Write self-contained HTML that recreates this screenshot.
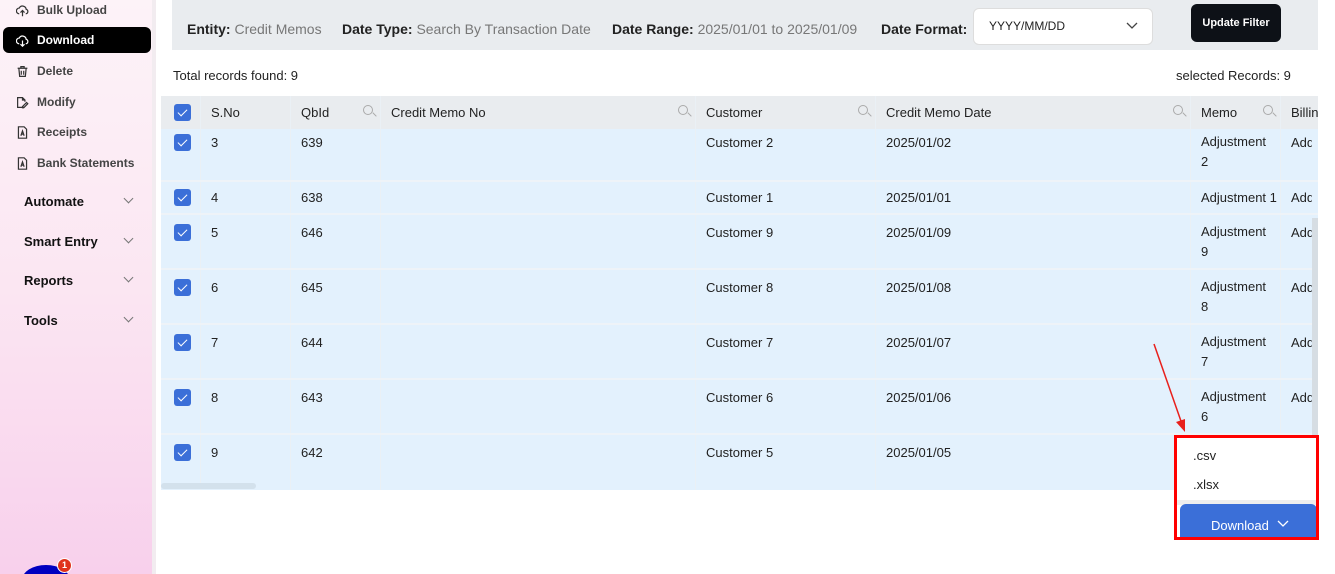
<!DOCTYPE html>
<html><head><style>
*{margin:0;padding:0;box-sizing:border-box}
html,body{width:1335px;height:574px;overflow:hidden}
body{background:#fff;font-family:"Liberation Sans",sans-serif;font-size:13px;color:#222;position:relative}
.side{position:absolute;left:0;top:0;width:156px;height:574px;background:linear-gradient(#fdf3f8,#fbe6f2 50%,#f8d0ec);border-right:4px solid #f2ecf0;overflow:hidden}
.it{position:absolute;left:16px;font-size:12px;font-weight:bold;color:#444;display:flex;align-items:center;gap:8px}
.it svg{width:13px;height:13px}
.act{position:absolute;left:3px;top:27px;width:148px;height:26px;background:#000;border-radius:6px}
.grp{position:absolute;left:24px;font-size:13px;font-weight:bold;color:#111}
.chev{position:absolute;left:125px;width:7px;height:7px;border-right:1.5px solid #777;border-bottom:1.5px solid #777;transform:rotate(45deg)}
.filter{position:absolute;left:172px;top:0;width:1146px;height:50px;background:#e9ecef}
.f{position:absolute;top:21px;font-size:14px}
.f b{color:#222}.f span{color:#777}
.sel{position:absolute;left:973px;top:8px;width:180px;height:37px;background:#fff;border:1px solid #ddd;border-radius:6px;font-size:12px;padding:10px 0 0 15px}
.upd{position:absolute;left:1191px;top:4px;width:90px;height:38px;background:#0d1117;border-radius:6px;color:#fff;font-size:11px;font-weight:bold;text-align:center;line-height:38px}
.tbl{position:absolute;left:161px;top:96px;width:1157px;height:394px;background:#e3f1fd;overflow:hidden}
.hd{position:absolute;left:0;top:0;width:100%;height:33px;background:#e9ecef}
.c{position:absolute;font-size:13px}
.cb{position:absolute;width:17px;height:17px;background:#3b6fd8;border-radius:3px}
.cb:after{content:"";position:absolute;left:6px;top:3px;width:4px;height:8px;border-right:1.5px solid #fff;border-bottom:1.5px solid #fff;transform:rotate(45deg)}
.vl{position:absolute;top:0;width:1px;height:394px;background:#eaf0f5}
.hl{position:absolute;left:0;width:100%;height:2px;background:#eef3f8}
.srch{position:absolute;top:9px;width:10px;height:10px;border:1.3px solid #aaa;border-radius:50%}
.srch:after{content:"";position:absolute;left:8px;top:8px;width:5px;height:1.3px;background:#aaa;transform:rotate(45deg)}
</style></head><body>
<div class="side">
<div class="act"></div>
<div class="it" style="top:3px"><svg viewBox="0 0 16 16" fill="none" stroke="#333" stroke-width="1.5"><path d="M4 12a3.5 3.5 0 0 1 0-7 4.5 4.5 0 0 1 8.5 1.5A2.8 2.8 0 0 1 12 12M8 15V8M5.5 10.5 8 8l2.5 2.5"/></svg>Bulk Upload</div>
<div class="it" style="top:33px;color:#fff"><svg viewBox="0 0 16 16" fill="none" stroke="#fff" stroke-width="1.5"><path d="M4 12a3.5 3.5 0 0 1 0-7 4.5 4.5 0 0 1 8.5 1.5A2.8 2.8 0 0 1 12 12M8 8v7M5.5 12.5 8 15l2.5-2.5"/></svg>Download</div>
<div class="it" style="top:64px"><svg viewBox="0 0 16 16" fill="none" stroke="#333" stroke-width="1.5"><path d="M2 4h12M6 4V2h4v2M3.5 4l1 10h7l1-10M6.5 7v5M9.5 7v5"/></svg>Delete</div>
<div class="it" style="top:95px"><svg viewBox="0 0 16 16" fill="none" stroke="#333" stroke-width="1.5"><path d="M10 14H2V2h6l3 3v2M8 2v3h3M8 13l5-5 1.5 1.5-5 5H8z"/></svg>Modify</div>
<div class="it" style="top:125px"><svg viewBox="0 0 16 16" fill="none" stroke="#333" stroke-width="1.5"><path d="M3 1h7l3 3v11H3zM6 12l2-6 2 6M6.5 10h3"/></svg>Receipts</div>
<div class="it" style="top:156px"><svg viewBox="0 0 16 16" fill="none" stroke="#333" stroke-width="1.5"><path d="M3 1h7l3 3v11H3zM6 12l2-6 2 6M6.5 10h3"/></svg>Bank Statements</div>
<div class="grp" style="top:194px">Automate</div><div class="chev" style="top:195px"></div>
<div class="grp" style="top:234px">Smart Entry</div><div class="chev" style="top:235px"></div>
<div class="grp" style="top:273px">Reports</div><div class="chev" style="top:274px"></div>
<div class="grp" style="top:313px">Tools</div><div class="chev" style="top:314px"></div>
<div style="position:absolute;left:22px;top:565px;width:48px;height:30px;background:#0000c0;border-radius:50%"></div>
<div style="position:absolute;left:57px;top:558px;width:15px;height:15px;background:#e0321c;border:1.5px solid #fff;border-radius:50%;color:#fff;font-size:9px;font-weight:bold;text-align:center;line-height:12px">1</div>
</div>
<div class="filter"></div>
<div class="f" style="left:187px"><b>Entity:</b> <span>Credit Memos</span></div>
<div class="f" style="left:342px"><b>Date Type:</b> <span>Search By Transaction Date</span></div>
<div class="f" style="left:612px"><b>Date Range:</b> <span>2025/01/01 to 2025/01/09</span></div>
<div class="f" style="left:881px"><b>Date Format:</b></div>
<div class="sel">YYYY/MM/DD<svg style="position:absolute;left:152px;top:13px" width="12" height="8"><path d="M1 1l5 5 5-5" fill="none" stroke="#444" stroke-width="1.3"/></svg></div>
<div class="upd">Update Filter</div>
<div class="c" style="left:173px;top:68px">Total records found: 9</div>
<div class="c" style="left:1176px;top:68px">selected Records: 9</div>
<div class="tbl">
<div class="hd"></div>
<div class="vl" style="left:39px"></div><div class="vl" style="left:129px"></div><div class="vl" style="left:219px"></div><div class="vl" style="left:534px"></div><div class="vl" style="left:714px"></div><div class="vl" style="left:1029px"></div><div class="vl" style="left:1119px"></div>
<div class="hl" style="top:84px"></div><div class="hl" style="top:117px"></div><div class="hl" style="top:172px"></div><div class="hl" style="top:227px"></div><div class="hl" style="top:282px"></div><div class="hl" style="top:337px"></div>
<div class="srch" style="left:202px"></div><div class="srch" style="left:517px"></div><div class="srch" style="left:697px"></div><div class="srch" style="left:1012px"></div><div class="srch" style="left:1102px"></div>
<div class="cb" style="left:13px;top:8px"></div>
<div class="c" style="left:50px;top:9px">S.No</div><div class="c" style="left:140px;top:9px">QbId</div><div class="c" style="left:230px;top:9px">Credit Memo No</div><div class="c" style="left:545px;top:9px">Customer</div><div class="c" style="left:725px;top:9px">Credit Memo Date</div><div class="c" style="left:1040px;top:9px">Memo</div><div class="c" style="left:1130px;top:9px">Billing</div>
<div style="position:absolute;left:0;top:387px;width:95px;height:6px;background:#d3e1ec;border-radius:3px"></div>
<div style="position:absolute;left:1151px;top:122px;width:6px;height:272px;background:#d6dde3"></div>
</div>
<div id="rows"></div>
<script>
var r=[[3,639,2,2,142],[4,638,1,1,197],[5,646,9,9,232],[6,645,8,8,287],[7,644,7,7,342],[8,643,6,6,397],[9,642,5,5,452]];
var h='';r.forEach(function(a){var t=a[4]-7;
h+='<div class="cb" style="left:174px;top:'+(t-1)+'px"></div>';
h+='<div class="c" style="left:211px;top:'+t+'px">'+a[0]+'</div><div class="c" style="left:301px;top:'+t+'px">'+a[1]+'</div><div class="c" style="left:706px;top:'+t+'px">Customer '+a[2]+'</div><div class="c" style="left:886px;top:'+t+'px">2025/01/0'+a[3]+'</div>';
if(a[0]!=9){h+=a[0]==4?'<div class="c" style="left:1201px;top:'+t+'px">Adjustment 1</div>':'<div class="c" style="left:1201px;top:'+t+'px;line-height:20px;margin-top:-3px">Adjustment<br>'+a[3]+'</div>';h+='<div class="c" style="left:1291px;top:'+t+'px;width:21px;overflow:hidden;white-space:nowrap">Address</div>';}
});document.getElementById('rows').innerHTML=h;
</script>
<svg style="position:absolute;left:1150px;top:342px" width="40" height="95"><line x1="4" y1="2" x2="32" y2="82" stroke="#e8201c" stroke-width="1.5"/><path d="M26 80l9 10 0-13z" fill="#e8201c"/></svg>
<div style="position:absolute;left:1174px;top:435px;width:145px;height:105px;border:3px solid #f00;background:#fff;overflow:hidden">
<div style="position:absolute;left:16px;top:10px;font-size:13px">.csv</div>
<div style="position:absolute;left:16px;top:39px;font-size:13px">.xlsx</div>
<div style="position:absolute;left:0;top:62px;width:140px;height:5px;background:#eee"></div>
<div style="position:absolute;left:3px;top:66px;width:137px;height:40px;background:#3b6fd8;border-radius:6px;color:#fff;font-size:13px;padding:14px 0 0 31px">Download<svg style="position:absolute;left:97px;top:16px" width="12" height="8"><path d="M1 1l5 5 5-5" fill="none" stroke="#fff" stroke-width="1.3"/></svg></div>
</div>
</body></html>
